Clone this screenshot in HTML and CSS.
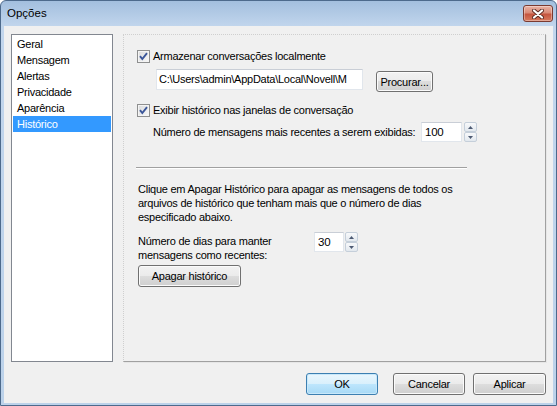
FILE: index.html
```html
<!DOCTYPE html>
<html lang="pt">
<head>
    <meta charset="UTF-8">
    <title>Opções</title>
    <link rel="stylesheet" href="styles.css">
</head>
<body>
    <div class="window">
        <div class="titlebar">
            <span class="title">Opções</span>
            <button class="close" type="button">
                <svg width="12" height="10" viewBox="0 0 12 10">
                    <path d="M2 1.5 L10 8.5 M10 1.5 L2 8.5" stroke="#5b2a22" stroke-width="4" stroke-linecap="round"/>
                    <path d="M2 1.5 L10 8.5 M10 1.5 L2 8.5" stroke="#ffffff" stroke-width="2.2" stroke-linecap="round"/>
                </svg>
            </button>
        </div>
        <div class="client">
            <div class="main">
                <ul class="nav">
                    <li>Geral</li>
                    <li>Mensagem</li>
                    <li>Alertas</li>
                    <li>Privacidade</li>
                    <li>Aparência</li>
                    <li class="selected">Histórico</li>
                </ul>
                <div class="panel">
                    <label class="check-row">
                        <span class="check">
                            <svg width="11" height="11" viewBox="0 0 11 11"><path d="M2 5.2 L4.3 8 L9 2.2" stroke="#3b5699" stroke-width="1.9" fill="none"/></svg>
                        </span>
                        Armazenar conversações localmente
                    </label>
                    <div class="path-row">
                        <div class="textbox path">C:\Users\admin\AppData\Local\Novell\M</div>
                        <button class="btn browse" type="button">Procurar...</button>
                    </div>
                    <label class="check-row second">
                        <span class="check">
                            <svg width="11" height="11" viewBox="0 0 11 11"><path d="M2 5.2 L4.3 8 L9 2.2" stroke="#3b5699" stroke-width="1.9" fill="none"/></svg>
                        </span>
                        Exibir histórico nas janelas de conversação
                    </label>
                    <div class="count-row">
                        <span class="count-label">Número de mensagens mais recentes a serem exibidas:</span>
                        <div class="textbox spin-value wide">100</div>
                        <div class="spin">
                            <span class="spin-btn"><svg width="5" height="3" viewBox="0 0 5 3"><path d="M0 3 L2.5 0 L5 3 Z" fill="#4d5a73"/></svg></span>
                            <span class="spin-btn"><svg width="5" height="3" viewBox="0 0 5 3"><path d="M0 0 L2.5 3 L5 0 Z" fill="#4d5a73"/></svg></span>
                        </div>
                    </div>
                    <div class="separator"></div>
                    <p class="info">Clique em Apagar Histórico para apagar as mensagens de todos os<br>arquivos de histórico que tenham mais que o número de dias<br>especificado abaixo.</p>
                    <div class="days-row">
                        <span class="days-label">Número de dias para manter<br>mensagens como recentes:</span>
                        <div class="textbox spin-value narrow">30</div>
                        <div class="spin">
                            <span class="spin-btn"><svg width="5" height="3" viewBox="0 0 5 3"><path d="M0 3 L2.5 0 L5 3 Z" fill="#4d5a73"/></svg></span>
                            <span class="spin-btn"><svg width="5" height="3" viewBox="0 0 5 3"><path d="M0 0 L2.5 3 L5 0 Z" fill="#4d5a73"/></svg></span>
                        </div>
                    </div>
                    <button class="btn clear" type="button">Apagar histórico</button>
                </div>
            </div>
            <div class="actions">
                <button class="btn default ok" type="button">OK</button>
                <button class="btn cancel" type="button">Cancelar</button>
                <button class="btn apply" type="button">Aplicar</button>
            </div>
        </div>
    </div>
</body>
</html>
```

FILE: styles.css
```css
body {
    margin: 0;
    background: #ffffff;
    font-family: "Liberation Sans", Arial, sans-serif;
    font-size: 11px;
    letter-spacing: -0.25px;
    color: #000;
}

.window {
    width: 557px;
    height: 406px;
    box-sizing: border-box;
    border: 1px solid #4d6a8c;
    border-radius: 6px 6px 0 0;
    background: linear-gradient(to bottom, #a3bfde 0px, #c2d6ed 26px, #bcd2ea 100%);
    display: flex;
    flex-direction: column;
}

.titlebar {
    height: 25px;
    display: flex;
    align-items: flex-start;
    padding-left: 6px;
}

.title {
    font-size: 11.5px;
    letter-spacing: 0;
    line-height: 25px;
    margin-top: 0;
}

.close {
    margin: 4px 3px 0 auto;
    width: 30px;
    height: 17px;
    padding: 0;
    border: 1px solid #7a3a30;
    border-radius: 3px;
    background: linear-gradient(to bottom, #eab3a5 0%, #d98a77 45%, #c5553f 55%, #d77a5e 100%);
    box-shadow: inset 0 0 0 1px rgba(255, 255, 255, 0.35);
    display: flex;
    align-items: center;
    justify-content: center;
}

.client {
    flex: 1;
    margin: 0 3px 2px 3px;
    background: #f0f0f0;
    padding: 8px 7px 8px 7px;
    display: flex;
    flex-direction: column;
}

.main {
    display: flex;
    gap: 10px;
    height: 328px;
}

.nav {
    list-style: none;
    margin: 0;
    padding: 1px;
    width: 102px;
    box-sizing: border-box;
    border: 1px solid #828790;
    background: #fff;
}

.nav li {
    height: 16px;
    line-height: 16px;
    padding-left: 4px;
}

.nav li.selected {
    background: #3399ff;
    color: #fff;
}

.panel {
    width: 423px;
    box-sizing: border-box;
    border-top: 1px dotted #cfcfcf;
    border-left: 1px dotted #cfcfcf;
    border-right: 1px solid #a0a0a0;
    border-bottom: 1px solid #a0a0a0;
    box-shadow: 1px 1px 0 #e6e6e6;
    padding: 13px 0 0 13px;
    display: flex;
    flex-direction: column;
    align-items: flex-start;
}

.check-row {
    display: flex;
    align-items: center;
    gap: 3px;
    height: 16px;
}

.check-row.second {
    margin-top: 10px;
}

.check {
    width: 13px;
    height: 13px;
    box-sizing: border-box;
    border: 1px solid #8e8f8f;
    background: linear-gradient(135deg, #d9dadb, #f9f9f9);
    box-shadow: inset 0 0 0 1px #f4f4f4;
    display: flex;
    align-items: center;
    justify-content: center;
}

.textbox {
    box-sizing: border-box;
    background: #fff;
    border: 1px solid #e1e6ec;
    border-top-color: #c9ced6;
    height: 21px;
    line-height: 19px;
    white-space: nowrap;
    overflow: hidden;
}

.path-row {
    display: flex;
    align-items: flex-start;
    margin: 5px 0 0 19px;
}

.path {
    width: 207px;
    padding-left: 2px;
}

.btn {
    box-sizing: border-box;
    font-family: "Liberation Sans", Arial, sans-serif;
    font-size: 11px;
    letter-spacing: -0.25px;
    color: #000;
    height: 21px;
    padding: 0;
    border: 1px solid #707070;
    border-radius: 3px;
    background: linear-gradient(to bottom, #f2f2f2 0%, #ebebeb 49%, #dddddd 50%, #cfcfcf 100%);
    box-shadow: inset 0 0 0 1px #fbfbfb;
}

.browse {
    width: 57px;
    margin: 2px 0 0 13px;
}

.count-row {
    display: flex;
    align-items: center;
    margin: 4px 0 0 16px;
    height: 20px;
}

.count-label {
    width: 268px;
}

.spin-value {
    height: 20px;
    line-height: 18px;
    padding-left: 3px;
    font-size: 11.5px;
}

.wide {
    width: 41px;
}

.narrow {
    width: 30px;
}

.spin {
    display: flex;
    flex-direction: column;
    width: 13px;
    height: 20px;
    margin-left: 2px;
    gap: 0;
}

.spin-btn {
    flex: 1;
    box-sizing: border-box;
    border: 1px solid #c5cfda;
    border-radius: 2px;
    background: linear-gradient(to bottom, #f8f9fb, #e2e8ee);
    display: flex;
    align-items: center;
    justify-content: center;
}

.separator {
    margin: 25px 0 0 -1px;
    width: 331px;
    border-top: 1px solid #a0a0a0;
    border-bottom: 1px solid #ffffff;
}

.info {
    margin: 13px 0 0 1px;
    line-height: 14px;
    white-space: nowrap;
}

.days-row {
    display: flex;
    align-items: flex-start;
    margin: 8px 0 0 1px;
}

.days-label {
    width: 176px;
    margin-top: 2px;
    line-height: 14px;
}

.days-row .spin {
    margin-left: 1px;
}

.clear {
    width: 103px;
    height: 22px;
    margin: 3px 0 0 1px;
}

.actions {
    display: flex;
    justify-content: flex-end;
    margin-top: 11px;
}

.actions .btn {
    height: 22px;
}

.ok {
    width: 72px;
    margin-right: 15px;
}

.cancel {
    width: 72px;
    margin-right: 8px;
}

.apply {
    width: 73px;
}

.default {
    border-color: #3c7fb1;
    background: linear-gradient(to bottom, #eaf6fd 0%, #d9f0fc 49%, #bee6fd 50%, #a7d9f5 100%);
    box-shadow: inset 0 0 0 1px #c8e8fa;
}
```
